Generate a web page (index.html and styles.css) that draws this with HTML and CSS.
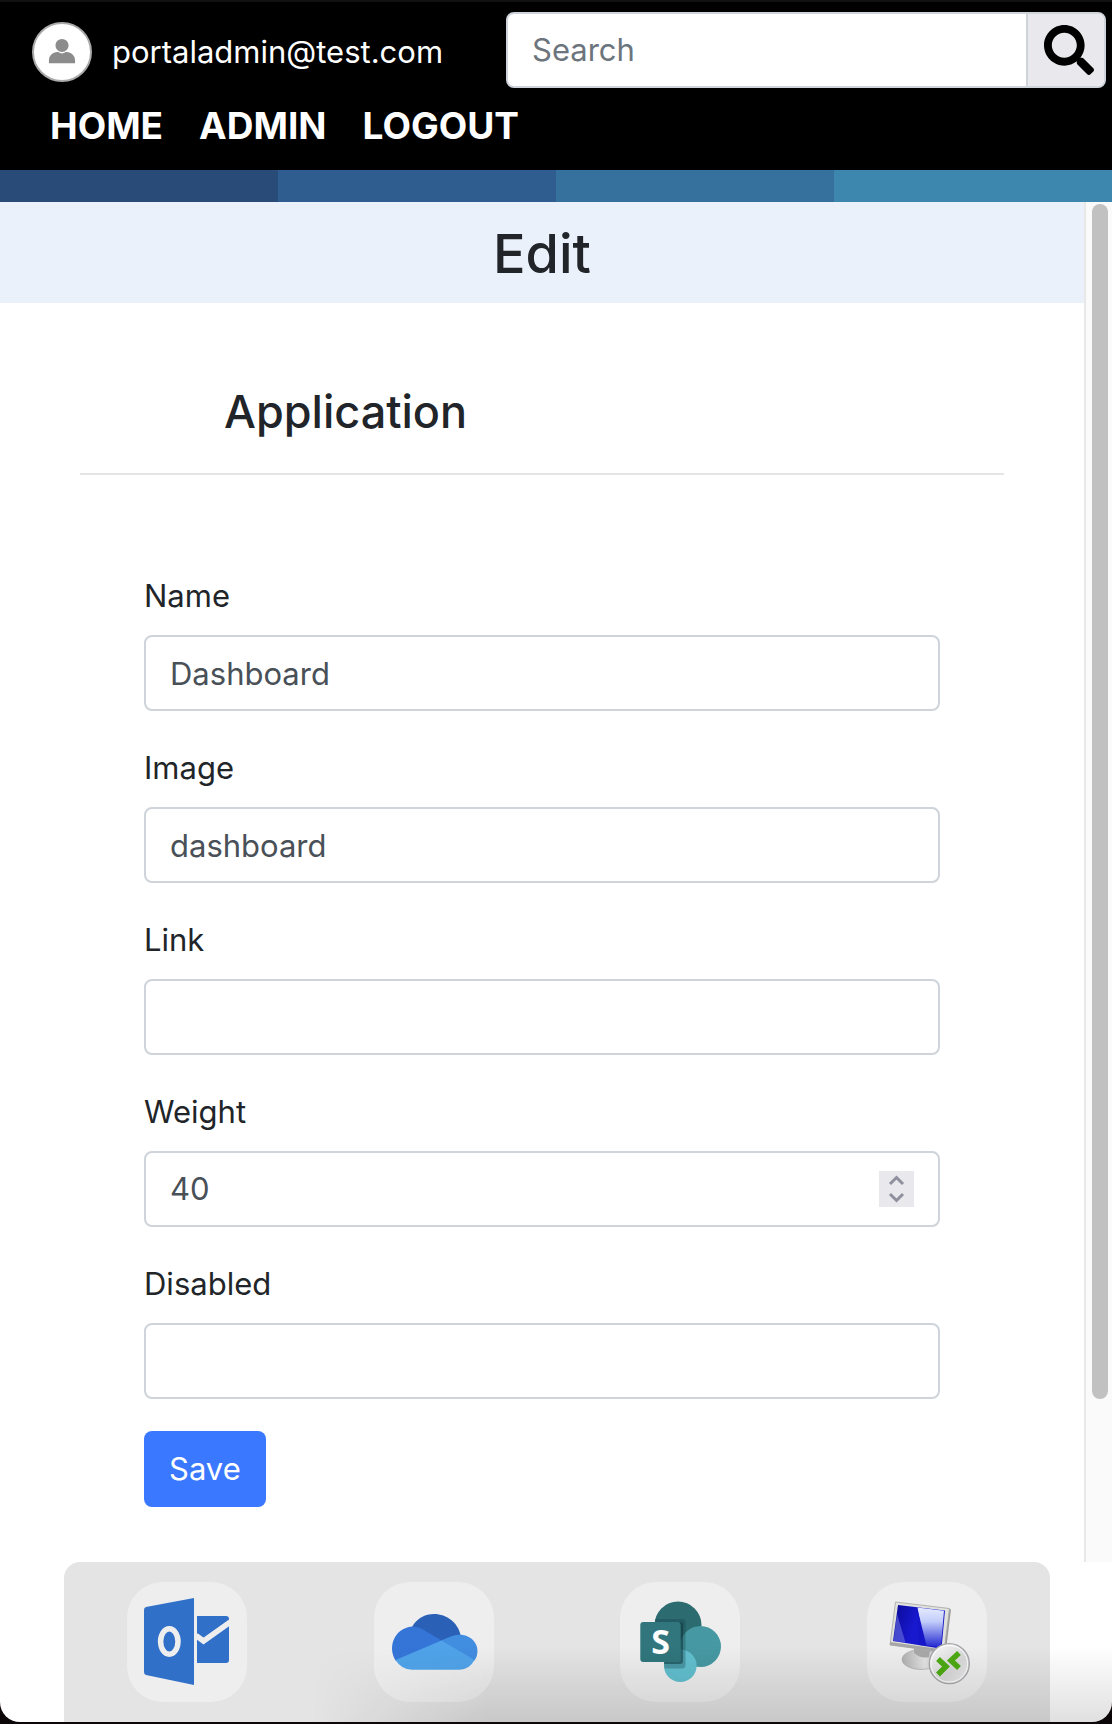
FILE: index.html
```html
<!DOCTYPE html>
<html lang="en">
<head>
  <meta charset="utf-8">
  <meta name="viewport" content="width=device-width, initial-scale=1">
  <title>Edit Application</title>
  <link rel="stylesheet" href="styles.css">
</head>
<body>
  <div class="window">
    <header class="header">
      <div class="header-top">
        <div class="user">
          <span class="avatar">
            <svg viewBox="0 0 60 60" aria-hidden="true">
              <ellipse cx="30" cy="23" rx="7" ry="7"/>
              <path d="M16 42v-3c0-5 4-9 9-9h1q4 3 8 0h1c5 0 9 4 9 9v3z"/>
            </svg>
          </span>
          <span class="user-name">portaladmin@test.com</span>
        </div>
        <form class="search" role="search">
          <input class="search-input" type="search" placeholder="Search" aria-label="Search">
          <button class="search-button" type="button" aria-label="Submit search">
            <svg viewBox="0 0 512 512" aria-hidden="true"><path d="M505 442.700L405.300 343c-4.500-4.500-10.600-7-17-7H372c27.600-35.300 44-79.700 44-128C416 93.100 322.900 0 208 0S0 93.100 0 208s93.100 208 208 208c48.300 0 92.700-16.400 128-44v16.300c0 6.400 2.500 12.500 7 17l99.700 99.700c9.400 9.400 24.600 9.400 33.900 0l28.300-28.300c9.400-9.400 9.400-24.600.1-34zM208 336c-70.700 0-128-57.200-128-128 0-70.700 57.200-128 128-128 70.700 0 128 57.200 128 128 0 70.700-57.200 128-128 128z"/></svg>
          </button>
        </form>
      </div>
      <nav class="nav">
        <a href="#home">HOME</a>
        <a href="#admin">ADMIN</a>
        <a href="#logout">LOGOUT</a>
      </nav>
    </header>
    <div class="stripes" aria-hidden="true"><span></span><span></span><span></span><span></span></div>

    <div class="body">
      <main class="content">
        <h1 class="page-title">Edit</h1>
        <section class="panel">
          <h2 class="panel-title">Application</h2>
          <form class="form">
            <div class="field">
              <label for="name">Name</label>
              <input class="control" id="name" type="text" value="Dashboard">
            </div>
            <div class="field">
              <label for="image">Image</label>
              <input class="control" id="image" type="text" value="dashboard">
            </div>
            <div class="field">
              <label for="link">Link</label>
              <input class="control" id="link" type="text">
            </div>
            <div class="field">
              <label for="weight">Weight</label>
              <div class="control number">
                <input class="number-input" id="weight" type="number" value="40">
                <span class="spinner" aria-hidden="true">
                  <svg viewBox="0 0 35 36"><path d="M11 13l6.500-6.500L24 13M11 23l6.500 6.500L24 23"/></svg>
                </span>
              </div>
            </div>
            <div class="field">
              <label for="disabled">Disabled</label>
              <input class="control" id="disabled" type="text">
            </div>
            <button class="save" type="button">Save</button>
          </form>
        </section>
      </main>
      <div class="scroll-track" aria-hidden="true"><div class="scroll-thumb"></div></div>
    </div>

    <footer class="dock">
      <a class="tile" href="#outlook" aria-label="Outlook">
        <svg viewBox="0 0 120 120" aria-hidden="true">
          <path fill="#3070c8" d="M67 16v87L19 93q-2-.5-2-3V28q0-2.500 2-3z"/>
          <ellipse cx="42.300" cy="59.500" rx="8.700" ry="12.700" fill="none" stroke="#eee" stroke-width="5.500"/>
          <path fill="#3070c8" d="M70 34h29q3 0 3 3v41q0 3-3 3H70z"/>
          <path fill="none" stroke="#eee" stroke-width="5.500" d="M69 53.500l7.500 5.500L104 39.500"/>
        </svg>
      </a>
      <a class="tile" href="#onedrive" aria-label="OneDrive">
        <svg viewBox="0 0 120 120" aria-hidden="true">
          <path fill="#2a61b7" d="M38 45C43 36 51 32 60 32c13 0 24 9 26.500 21L68 60z"/>
          <path fill="#3475d7" d="M22 79C13 66 20 46 38 44.500q6 0 11 3L70 60 40 74z"/>
          <path fill="#418de0" d="M67 58.500l11-4.500c16-5.500 30 7 24 22l-2 3-22-8z"/>
          <path fill="#50a3e9" d="M21.500 78L67.500 58.500 100.500 78q-5 9.500-15 9.700H38q-11-.5-16.500-9.700z"/>
        </svg>
      </a>
      <a class="tile" href="#sharepoint" aria-label="SharePoint">
        <svg viewBox="0 0 120 120" aria-hidden="true">
          <circle cx="58" cy="43" r="23.500" fill="#2c6b70"/>
          <circle cx="80.500" cy="64.500" r="20.500" fill="#4698a2"/>
          <circle cx="60.300" cy="83.700" r="16.300" fill="#62bfce"/>
          <path fill="#103c42" opacity=".3" d="M35 37h27q3.500 0 3.500 3.500V83q0 3.500-3.500 3.500H44.500q-1-3-.2-6.500z"/>
          <path fill="#0c3237" opacity=".5" d="M58 40h2q3 0 3 3v36q0 3-3 3H44v-3z"/>
          <rect x="20.300" y="40" width="40.400" height="40" rx="3" fill="#30767c"/>
          <text x="40.500" y="72" class="logo-letter">S</text>
        </svg>
      </a>
      <a class="tile" href="#remote-desktop" aria-label="Remote Desktop">
        <svg viewBox="0 0 120 120" aria-hidden="true">
          <defs>
            <linearGradient id="screen" x1="0" y1="0" x2="1" y2=".3">
              <stop offset="0" stop-color="#0a0a96"/><stop offset=".5" stop-color="#1818cf"/><stop offset="1" stop-color="#1818c8"/>
            </linearGradient>
            <linearGradient id="glare" x1="0" y1="0" x2="0" y2="1">
              <stop offset="0" stop-color="#e4ebff"/><stop offset=".35" stop-color="#c3cdfb"/><stop offset="1" stop-color="#2026d0"/>
            </linearGradient>
            <linearGradient id="stand" x1="0" y1="0" x2="1" y2="0">
              <stop offset="0" stop-color="#b0b0b0"/><stop offset=".6" stop-color="#e4e4e4"/><stop offset="1" stop-color="#bdbdbd"/>
            </linearGradient>
            <linearGradient id="badge" x1="0" y1="0" x2="1" y2="1">
              <stop offset="0" stop-color="#fafafa"/><stop offset=".6" stop-color="#d8d8d8"/><stop offset="1" stop-color="#ededed"/>
            </linearGradient>
          </defs>
          <ellipse cx="54" cy="77.500" rx="19" ry="10" fill="url(#stand)" stroke="#aaa" stroke-width=".7"/>
          <path fill="#a8a8a8" d="M47 66l16 3-1 6q-8 2-15-4z"/>
          <path fill="#9a9a9a" d="M80 26l4 1.500L79 68l-4 2z"/>
          <path fill="#e0e0dc" stroke="#a4a4a2" stroke-width=".8" d="M28.500 20l54 6.500L77 70 23 63z"/>
          <path fill="#a6a6a6" d="M23 60l53 7.500-.5 3L23 63z"/>
          <path fill="url(#screen)" d="M31 23l47 5.500-3.500 38.200L26 59z"/>
          <path fill="url(#glare)" d="M50.500 25.500L77 28.800l-3.200 36.700L57 63z"/>
          <path fill="#1616c8" d="M50 25.300l9.500 38.200L52 63z"/>
          <path fill="#7178e4" opacity=".55" d="M30 32l8.500 28.500L26.500 59z"/>
          <circle cx="82.300" cy="81.700" r="20" fill="url(#badge)" stroke="#a5a5aa" stroke-width="1.300"/>
          <circle cx="82.300" cy="81.700" r="18.300" fill="none" stroke="#fff"/>
          <path fill="none" stroke="#4daa12" stroke-width="5.500" d="M71 77l8 7.500-8 8M92 71l-8 7.500 8 7.500"/>
        </svg>
      </a>
    </footer>
  </div>
</body>
</html>
```
FILE: styles.css
```css
*,
*::before,
*::after {
  box-sizing: border-box;
}

body {
  margin: 0;
  background: #0d0608;
  color: #212529;
  font-family: Inter, "Liberation Sans", sans-serif;
  font-size: 31px;
  line-height: 48px;
}

input,
button {
  font: inherit;
}

.window {
  position: relative;
  display: flex;
  flex-direction: column;
  min-height: calc(100vh - 2px);
  margin-bottom: 2px;
  overflow: hidden;
  background: #fff;
  border-radius: 0 0 20px 20px;
}

/* Soft shade along the bottom edge, fading out to the left */
.window::after {
  content: "";
  position: absolute;
  right: 0;
  bottom: 0;
  left: 0;
  height: 76px;
  background: linear-gradient(transparent, rgba(0, 0, 0, 0.12));
  mask-image: linear-gradient(90deg, transparent 28%, #000 44%);
  pointer-events: none;
}

/* Header */
.header {
  padding: 10px 6px 20px 32px;
  background: #000;
  border-top: 2px solid #111;
  color: #fff;
}

.header-top {
  display: flex;
  align-items: center;
  justify-content: space-between;
  gap: 24px;
}

.user {
  display: flex;
  align-items: center;
  gap: 20px;
  padding-top: 4px;
}

.avatar {
  width: 60px;
  height: 60px;
  overflow: hidden;
  background: #fff;
  border: 2px solid #aaa;
  border-radius: 50%;
}

.avatar svg {
  display: block;
  fill: #8c8c8c;
}

.search {
  display: flex;
  width: 600px;
  height: 76px;
  overflow: hidden;
  background: #fff;
  border: 2px solid #ced4da;
  border-radius: 8px;
}

.search-input {
  flex: 1;
  min-width: 0;
  padding: 0 24px;
  background: none;
  border: 0;
  color: #495057;
}

.search-input::placeholder {
  color: #6c757d;
  opacity: 1;
}

.search-button {
  display: flex;
  align-items: center;
  padding: 0 10px 0 16px;
  background: #e9e9ed;
  border: 0;
  border-left: 2px solid #ced4da;
}

.search-button svg {
  width: 50px;
  height: 50px;
}

.nav {
  display: flex;
  gap: 36px;
  padding: 14px 18px 0;
  font-size: 37px;
  font-weight: 700;
}

.nav a {
  color: inherit;
  text-decoration: none;
}

.stripes {
  display: grid;
  grid-template-columns: repeat(4, 1fr);
  height: 32px;
}

.stripes span:nth-child(1) { background: #284c77; }
.stripes span:nth-child(2) { background: #305d90; }
.stripes span:nth-child(3) { background: #36719e; }
.stripes span:nth-child(4) { background: #3d86ad; }

/* Scrolling body */
.body {
  display: flex;
  flex: 1;
}

.content {
  flex: 1;
  min-width: 0;
}

.scroll-track {
  width: 28px;
  padding: 2px 4px 0 6px;
  background: #fafafa;
  border-left: 2px solid #e8e8e8;
}

.scroll-thumb {
  height: 88%;
  background: #c1c1c1;
  border-radius: 8px;
}

.page-title {
  margin: 0;
  padding: 17px 16px 15px;
  background: #ebf1fa;
  font-size: 54px;
  font-weight: 500;
  line-height: 69px;
  text-align: center;
}

.panel {
  padding: 80px 80px 55px;
}

.panel-title {
  margin: 0;
  padding: 0 144px 32px;
  border-bottom: 2px solid #e5e5e5;
  font-size: 45px;
  font-weight: 500;
  line-height: 58px;
}

.form {
  padding: 97px 64px 0;
}

.field {
  display: flex;
  flex-direction: column;
  gap: 15px;
  margin-bottom: 33px;
}

.field:last-of-type {
  margin-bottom: 32px;
}

.control {
  width: 100%;
  height: 76px;
  padding: 0 24px;
  background: #fff;
  border: 2px solid #ced4da;
  border-radius: 8px;
  color: #495057;
}

.number {
  display: flex;
  align-items: center;
}

.number-input {
  flex: 1;
  min-width: 0;
  padding: 0;
  background: none;
  border: 0;
  color: inherit;
  appearance: textfield;
}

.spinner {
  width: 35px;
  height: 36px;
  background: #e9e9ed;
}

.spinner svg {
  display: block;
  fill: none;
  stroke: #8f8f9d;
  stroke-width: 3;
}

.save {
  height: 76px;
  padding: 0 25px;
  background: #3a78ff;
  border: 0;
  border-radius: 8px;
  color: #fff;
}

/* App dock */
.dock {
  display: grid;
  grid-template-columns: repeat(4, 1fr);
  justify-items: center;
  margin: 0 62px 0 64px;
  padding: 20px 0;
  background: #e4e4e4;
  border-radius: 16px 16px 0 0;
}

.tile {
  width: 120px;
  height: 120px;
  background: #eee;
  border-radius: 36px;
}

.tile svg {
  display: block;
}

.logo-letter {
  fill: #fff;
  font-family: "Open Sans", sans-serif;
  font-size: 34px;
  font-weight: 700;
  text-anchor: middle;
}
```
